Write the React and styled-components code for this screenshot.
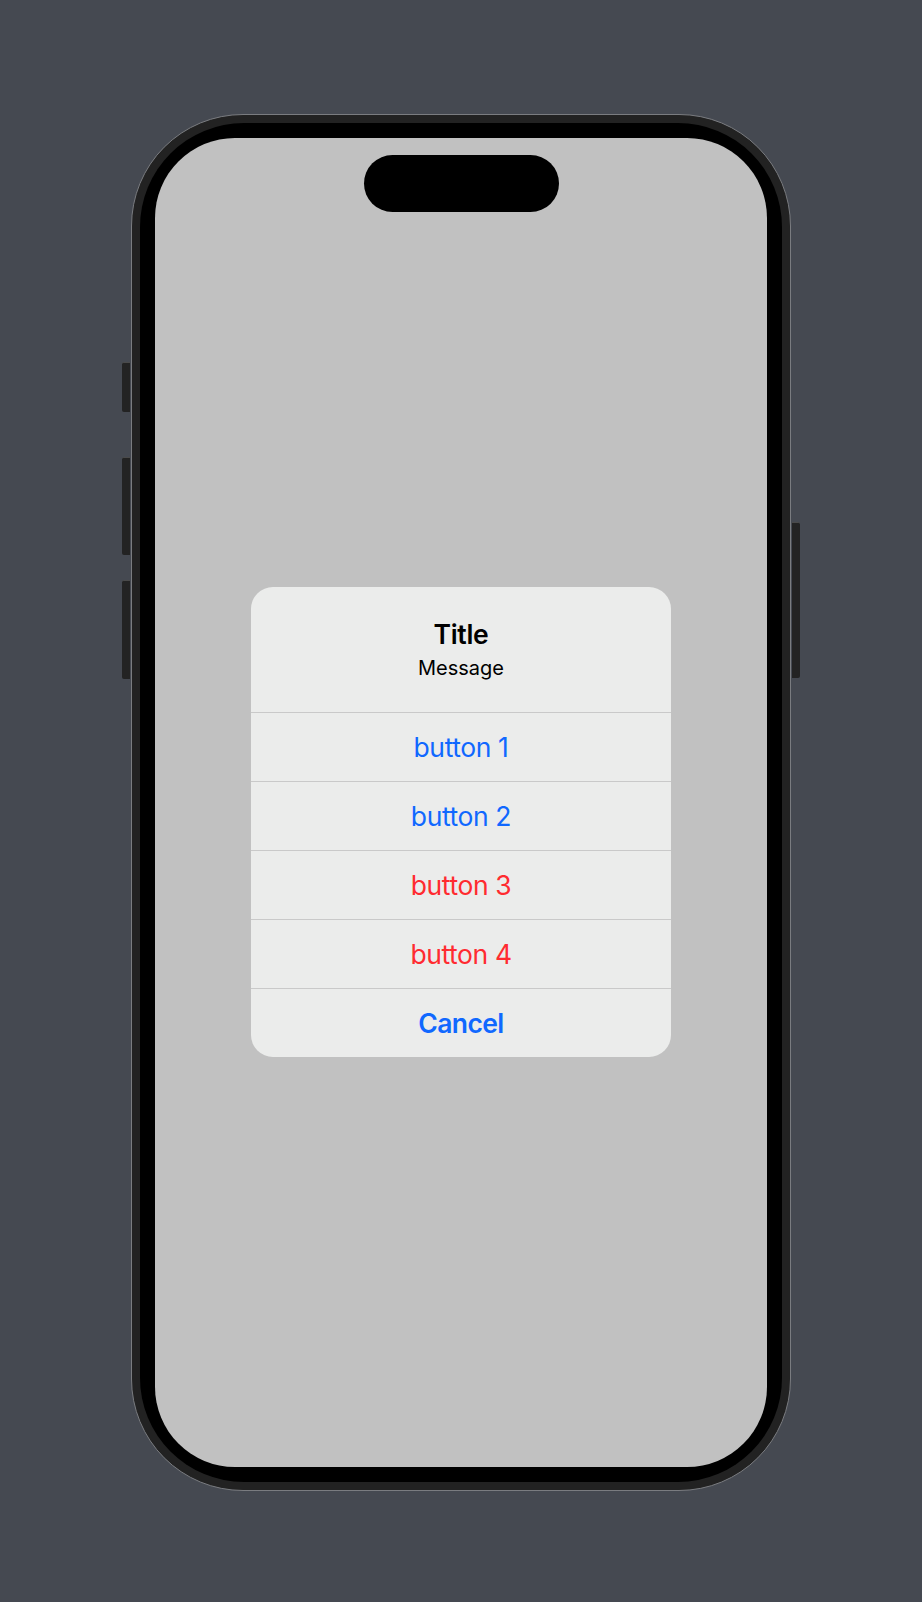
import styled, {createGlobalStyle} from "styled-components";

const GlobalStyle = createGlobalStyle`
  html, body {
    margin: 0;
    padding: 0;
    background: #454951;
  }
  body {
    font-family: Inter, "Liberation Sans", Arial, sans-serif;
  }
`

const Page = styled.div`
  width: 922px;
  height: 1602px;
  display: flex;
  flex-direction: column;
  align-items: center;
  padding-top: 114px;
  box-sizing: border-box;
  background: #454951;
`

const Phone = styled.div`
  position: relative;
  width: 660px;
  height: 1377px;
  box-sizing: border-box;
  padding: 8px;
  border-radius: 112px;
  background: #222222;
  border: 1px solid #7a7c80;
`

const SideButton = styled.div`
  position: absolute;
  top: ${p => p.top}px;
  height: ${p => p.h}px;
  width: 8px;
  background: #232323;
  border-top: 1px solid #4a4a4a;
  ${p => p.right ? "right: -10px; border-radius: 0 2px 2px 0;" : "left: -10px; border-radius: 2px 0 0 2px;"}
`

const Bezel = styled.div`
  height: 100%;
  box-sizing: border-box;
  padding: 15px;
  border-radius: 104px;
  background: #000;
`

const Screen = styled.div`
  height: 100%;
  border-radius: 80px;
  background: #c1c1c1;
  display: flex;
  flex-direction: column;
  align-items: center;
  overflow: hidden;
`

const Island = styled.div`
  margin-top: 17px;
  width: 195px;
  height: 57px;
  border-radius: 29px;
  background: #000;
`

const Alert = styled.div`
  margin-top: 375px;
  width: 420px;
  border-radius: 22px;
  background: #ebeceb;
  overflow: hidden;
  display: flex;
  flex-direction: column;
`

const Header = styled.div`
  padding: 31px 20px 32px;
  display: flex;
  flex-direction: column;
  align-items: center;
  gap: 6px;
  color: #000;
`

const Title = styled.div`
  font-size: 26.5px;
  line-height: 32px;
  font-weight: 600;
  letter-spacing: -0.3px;
`

const Message = styled.div`
  font-size: 20px;
  line-height: 24px;
`

const Action = styled.div`
  height: 68px;
  border-top: 1px solid #c9c9c9;
  display: flex;
  align-items: center;
  justify-content: center;
  font-size: 26.5px;
  letter-spacing: ${p => p.bold ? "-0.6px" : "-0.4px"};
  font-weight: ${p => p.bold ? 600 : 400};
  color: ${p => p.destructive ? "#ff2b30" : "#1068ff"};
`

const buttons = [
    {label: "button 1"},
    {label: "button 2"},
    {label: "button 3", destructive: true},
    {label: "button 4", destructive: true},
]

export default function App() {
    return (
        <Page>
            <GlobalStyle/>
            <Phone>
                <SideButton top={247} h={49}/>
                <SideButton top={342} h={97}/>
                <SideButton top={465} h={98}/>
                <SideButton right top={407} h={155}/>
                <Bezel>
                    <Screen>
                        <Island/>
                        <Alert>
                            <Header>
                                <Title>Title</Title>
                                <Message>Message</Message>
                            </Header>
                            {buttons.map(b => (
                                <Action key={b.label} destructive={b.destructive}>{b.label}</Action>
                            ))}
                            <Action bold>Cancel</Action>
                        </Alert>
                    </Screen>
                </Bezel>
            </Phone>
        </Page>
    )
}
